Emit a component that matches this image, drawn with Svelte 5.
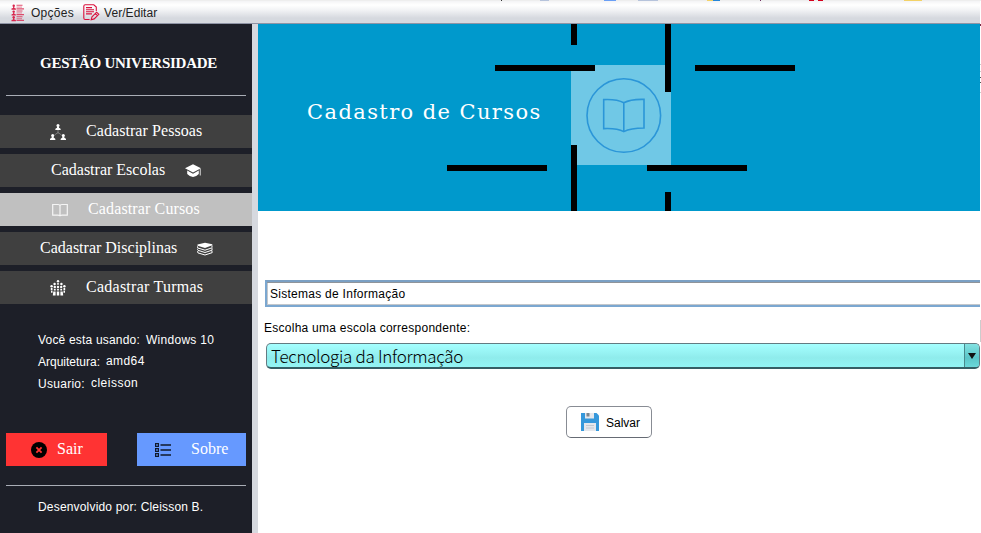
<script>
  const items = [
    { label: 'Cadastrar Pessoas', icon: 'people', cls: 'pessoas', first: true },
    { label: 'Cadastrar Escolas', icon: 'cap', cls: 'escolas', first: false },
    { label: 'Cadastrar Cursos', icon: 'book', cls: 'cursos', first: true },
    { label: 'Cadastrar Disciplinas', icon: 'stack', cls: 'disciplinas', first: false },
    { label: 'Cadastrar Turmas', icon: 'group', cls: 'turmas', first: true }
  ];
  const heads = [[8, 0], [4.6, 2.7], [11.4, 2.7], [1.6, 5], [14.4, 5], [4.8, 5.6], [8, 5.6], [11.2, 5.6]];
</script>

{#snippet icon(name)}
  <svg class="ico" width="16" height="16" viewBox="0 0 16 16" fill="#fff">
    {#if name === 'people'}
      <path d="M8 6v3.5M8 8.5l-3.5 2.5M8 8.5l3.5 2.5" stroke="#8a8a8a" stroke-width=".8" fill="none" />
      {#each [[8, 0], [2.7, 10], [13.3, 10]] as [x, y]}
        <g transform="translate({x} {y})">
          <circle cx="0" cy="1.5" r="1.5" />
          <path d="M-1 2.5H1V3.8Q2.8 4.2 2.8 6H-2.8Q-2.8 4.2-1 3.8Z" />
        </g>
      {/each}
    {:else if name === 'cap'}
      <path d="M8 1.2 0 5.3 8 9.6 16 5.3ZM2.2 7.5V11Q8 17 13.8 11V7.5L8 10.8ZM14.8 6h.8v6.5h-.8z" />
    {:else if name === 'book'}
      <path d="M.7 2.5H6Q8 2.5 8 4Q8 2.5 10 2.5h5.3v10.7H10Q8 13.2 8 14.3Q8 13.2 6 13.2H.7ZM8 4v9.5" fill="none" stroke="#f5f5f5" stroke-width="1.2" />
    {:else if name === 'stack'}
      <path d="M.5 3.5 8 1.8l7.3 1.4v1L8 7 .5 4.8Z" />
      <path d="M.5 5.3Q-.3 6.2 1 7L8 9.2l7.3-2.5M1 7.4Q0 8.5 1 9.3l7 2.2 7.3-2.4M1 9.9Q0 11 1 11.9L8 14l7.3-2.4M15 4.5v1.8M15 7.2v1.7M15 9.8v1.8" fill="none" stroke="#fff" stroke-width="1" />
    {:else}
      {#each heads as [x, y]}
        <circle cx={x} cy={y + 1.3} r="1.2" />
      {/each}
      <path d="M7.2 3h1.6v1.7H7.2zM.8 8h1.7v2.2H.8zM13.5 8h1.7v2.2h-1.7zM3.9 8.8h1.8v1.8H3.9zM7.1 8.8h1.8v1.8H7.1zM10.3 8.8h1.8v1.8h-1.8z" />
      <path d="M1 10.8h1.5v2H1zM13.5 10.8H15v2h-1.5zM3.3 11.6h2.3v3.8H2.8zM6.8 11.6h2.4v3.8H6.8zM10.4 11.6h2.3l.5 3.8h-2.8z" />
    {/if}
  </svg>
{/snippet}

<div class="app">
  <svg class="strip" width="981" height="1" shape-rendering="crispEdges">
    <path d="M0 .5h981" stroke="#eee" />
    <path d="M501 .5h1" stroke="#333" />
    <path d="M540 .5h9M638 .5h20" stroke="#b6c3db" />
    <path d="M604 .5h12" stroke="#6a9ff5" />
    <path d="M707 .5h6M904 .5h18" stroke="#f3d267" />
    <path d="M713 .5h7" stroke="#2686d8" />
    <path d="M760 .5h1" stroke="#713060" />
    <path d="M809 .5h5M818 .5h5" stroke="#d5001c" />
  </svg>
  <nav class="menubar">
    <div class="menu">
      <svg width="16" height="18" viewBox="0 0 16 18" fill="#d9244c">
        {#each [0.5, 6.3, 12] as y}
          <g transform="translate(0 {y})">
            <circle cx="2.7" cy="1.3" r="1.2" />
            <path d="M2.1 2h1.2v1.5l1.6.6v1.2H.5V4.1l1.6-.6z" />
            <path d="M5.5 .3h6v1h-6zM5.5 3.8h7.5v1.2H5.5z" opacity=".8" />
            <path d="M5.5 2h5.5v1.2H5.5z" opacity=".45" />
          </g>
        {/each}
      </svg>
      <span class="m1">Opções</span>
    </div>
    <div class="menu second">
      <svg width="17" height="17" viewBox="0 0 17 17" fill="none" stroke="#d9103d" stroke-width="1.1">
        <path d="M13.3 7V3L10.8.8H2.2Q.8.8.8 2.2v11.9q0 1.4 1.4 1.4h4.4M3 3.6h6M3 5.7h8M3 7.8h8M3 9.9h6" />
        <path d="M8.2 15.7 9 12.8 13.6 8.2 15.8 10.3l-4.6 4.6ZM12.4 9.6l2 2" />
      </svg>
      <span class="m2">Ver/Editar</span>
    </div>
  </nav>
  <div class="body">
    <aside>
      <h1><span>GESTÃO UNIVERSIDADE</span></h1>
      <div class="rule"></div>
      <div class="nav">
        {#each items as it}
          <button class="item {it.cls}">
            {#if it.first}{@render icon(it.icon)}{/if}
            <span>{it.label}</span>
            {#if !it.first}{@render icon(it.icon)}{/if}
          </button>
        {/each}
      </div>
      <div class="info">
        <div><span class="i1">Você esta usando:</span><span class="i2">Windows 10</span></div>
        <div><span>Arquitetura:</span><span class="i4 up">amd64</span></div>
        <div><span class="i5">Usuario:</span><span class="i6 up">cleisson</span></div>
      </div>
      <div class="actions">
        <button class="exit">
          <svg width="16" height="16" viewBox="0 0 16 16"><circle cx="8" cy="8" r="8" /><path d="m5.4 5.4 5.2 5.2m0-5.2-5.2 5.2" stroke="#f33" stroke-width="1.8" /></svg>
          <span>Sair</span>
        </button>
        <button class="about">
          <svg width="16" height="14" viewBox="0 0 16 14" fill="none" stroke="#111a2b">
            <path d="M.6.6h2.8v2.8H.6zM.6 5.6h2.8v2.8H.6zM.6 10.6h2.8v2.8H.6z" stroke-width="1.2" />
            <path d="M5.5 2H16M5.5 7H16M5.5 12H16" stroke-width="1.7" />
          </svg>
          <span>Sobre</span>
        </button>
      </div>
      <div class="rule"></div>
      <p class="credit"><span>Desenvolvido por: Cleisson B.</span></p>
    </aside>
    <main>
      <header>
        <svg class="art" width="722" height="187" viewBox="258 24 722 187">
          <path d="M571 65h100v100H571z" fill="#70c8e6" />
          <g fill="none" stroke="#2b96d8" stroke-width="1.6">
            <circle cx="623.8" cy="115.5" r="36.8" />
            <path d="M603.7 99.6Q617 99 623.8 102.8Q630.6 99 644 99.4V128Q630.6 128 623.8 131.6Q617 128 603.7 128.6ZM623.8 102.8v28.8" />
          </g>
          <path d="M571 24h6v21h-6zM665 24h6v68h-6zM495 65h100v6H495zM695 65h100v6H695zM571 145h6v66h-6zM447 165h100v6H447zM647 165h100v6H647zM665 192h6v19h-6z" />
        </svg>
        <h2>Cadastro de Cursos</h2>
      </header>
      <div class="field"><span>Sistemas de Informação</span></div>
      <div class="label"><span>Escolha uma escola correspondente:</span></div>
      <div class="combo">
        <span>Tecnologia da Informação</span>
        <div class="arrow"><svg width="8" height="6"><path d="M0 0h8L4 6z" fill="#111" /></svg></div>
      </div>
      <button class="save">
        <svg width="20" height="20" viewBox="0 0 20 20">
          <path d="M1 1h15.5L19 3.5V19H1z" fill="#3698db" />
          <path d="M5 1h9v5.5H5zM4 11h12v8H4z" fill="#e5e7ec" />
          <path d="M6.5 1h3v3.5h-3z" fill="#7d8790" />
          <path d="M6 13.5h8M6 16h8" stroke="#c3c8d0" />
        </svg>
        <span>Salvar</span>
      </button>
    </main>
    <svg class="edge" width="1" height="509" shape-rendering="crispEdges">
      <path d="M0 0h1v2H0z" fill="#7b2946" />
      <path d="M0 40h1v1H0zM0 47h1v1H0zM0 68h1v1H0z" fill="#ccc" />
      <path d="M0 53h1v1H0zM0 58h1v1H0z" fill="#555" />
      <path d="M0 296h1v22H0z" fill="#ccc" />
    </svg>
  </div>
</div>

<style>
  .app { position: relative; width: 981px; height: 533px; overflow: hidden; background: #fff; font: 12px "Liberation Sans", Arial, sans-serif; color: #000; }
  .app * { box-sizing: border-box; }
  svg { display: block; flex: none; }
  span, h2 { white-space: nowrap; }
  button { display: flex; align-items: center; border: 0; padding: 0; margin: 0; color: #fff; font: 16px/31px "Liberation Serif", serif; }
  button span { height: 33px; }
  .strip { position: absolute; left: 0; top: 0; }
  .menubar { height: 24px; display: flex; width: 980px; padding-top: 3px; background: linear-gradient(#f1f1f3 0, #fff 5px, #f2f3f5 10px, #d6d9df 18px, #d6d9df 100%); border-bottom: 1px solid #8f94a5; color: #222; }
  .menu { display: flex; align-items: center; padding-left: 11px; height: 19px; }
  .menu span { margin-left: 4px; line-height: 19px; height: 18px; }
  .m1 { width: 43px; letter-spacing: .28px; }
  .menu.second { padding-left: 9px; }
  .menu .m2 { letter-spacing: .06px; }
  .body { display: flex; height: 509px; }
  aside { width: 258px; border-right: 6px solid #d6d9df; background: #1d1f28; color: #fff; }
  h1 { margin: 0; height: 71px; padding: 29px 0 0 40px; font: bold 15px/20px "Liberation Serif", serif; letter-spacing: -.27px; }
  .rule { height: 1px; margin: 0 6px; background: #a9adb6; }
  .nav { display: flex; flex-direction: column; gap: 6px; margin-top: 19px; }
  .item { height: 33px; background: #404040; width: 252px; gap: 20px; }
  .pessoas { padding-left: 50px; letter-spacing: .07px; }
  .escolas { padding-left: 51px; }
  .cursos { padding-left: 52px; background: #c0c0c0; letter-spacing: .13px; }
  .disciplinas { padding-left: 40px; }
  .turmas { padding-left: 50px; letter-spacing: .25px; }
  .info { height: 66px; margin: 25px 0 38px 38px; }
  .info div { display: flex; height: 22px; line-height: 22px; gap: 6px; }
  .i1 { letter-spacing: .19px; }
  .i2 { letter-spacing: .28px; }
  .i4 { letter-spacing: .4px; }
  .i5 { letter-spacing: .28px; }
  .i6 { letter-spacing: .5px; }
  .up { margin-top: -1px; }
  .actions { display: flex; justify-content: space-between; margin: 0 6px 19px; height: 33px; }
  .exit { width: 101px; background: #f33; padding-left: 25px; gap: 10px; }
  .about { width: 109px; background: #69f; padding-left: 18px; gap: 20px; }
  .credit { margin: 13px 0 0 38px; line-height: 16px; letter-spacing: .18px; }
  main { width: 722px; }
  header { position: relative; height: 187px; background: #09c; }
  .art { position: absolute; inset: 0; }
  h2 { position: relative; margin: 0; padding: 74px 0 0 49px; font: 21px/28px "DejaVu Serif", serif; letter-spacing: 1.4px; color: #fff; }
  .field { height: 27px; margin: 69px 0 0 7px; padding-left: 3px; line-height: 24px; border: 2px solid #7ba7d0; border-right: 0; border-top-color: #7ba0c4; box-shadow: inset 0 1px #8f949a, inset 1px -1px #c3c7cb; letter-spacing: .27px; }
  .label { height: 20px; margin: 12px 0 0 6px; line-height: 18px; letter-spacing: .26px; }
  .combo { display: flex; justify-content: space-between; height: 26px; margin: 4px 0 0 8px; padding-left: 4px; border: 1px solid #637b82; border-bottom: 2px solid #355e65; border-radius: 5px; background: linear-gradient(#a5ffff, #8fecec 60%, #92f5f5); font: 300 17px/23px "Noto Sans CJK JP", sans-serif; letter-spacing: -.3px; overflow: hidden; }
  .arrow { width: 15px; border-left: 1px solid #49898d; padding: 9px 0 0 3px; background: linear-gradient(#83e2e2, #5ac5c8 60%, #6bd8da); }
  .save { width: 86px; height: 32px; margin: 37px 0 0 308px; padding-left: 13px; gap: 6px; border: 1px solid #888c94; border-bottom-color: #666b74; border-radius: 5px; background: #fff; color: #000; font: 12px/34px "Liberation Sans", Arial, sans-serif; }
</style>
